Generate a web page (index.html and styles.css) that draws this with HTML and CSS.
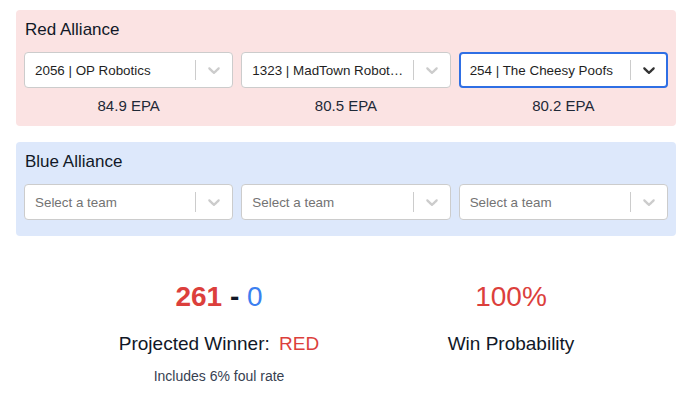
FILE: index.html
```html
<!DOCTYPE html>
<html>
<head>
<meta charset="utf-8">
<link rel="stylesheet" href="styles.css">
</head>
<body>
<div class="page">
  <section class="alliance red">
    <h2 class="alliance-title">Red Alliance</h2>
    <div class="slots">
      <div class="slot">
        <div class="select">
          <span class="value">2056 | OP Robotics</span>
          <span class="sep"></span>
          <span class="ind"><svg viewBox="0 0 20 20" width="20" height="20"><path d="M4.516 7.548c0.436-0.446 1.043-0.481 1.576 0l3.908 3.747 3.908-3.747c0.533-0.481 1.141-0.446 1.574 0 0.436 0.445 0.408 1.197 0 1.615-0.406 0.418-4.695 4.502-4.695 4.502-0.217 0.223-0.502 0.335-0.787 0.335s-0.57-0.112-0.789-0.335c0 0-4.287-4.084-4.695-4.502s-0.436-1.170 0-1.615z"/></svg></span>
        </div>
        <div class="epa">84.9 EPA</div>
      </div>
      <div class="slot">
        <div class="select">
          <span class="value">1323 | MadTown Robotics</span>
          <span class="sep"></span>
          <span class="ind"><svg viewBox="0 0 20 20" width="20" height="20"><path d="M4.516 7.548c0.436-0.446 1.043-0.481 1.576 0l3.908 3.747 3.908-3.747c0.533-0.481 1.141-0.446 1.574 0 0.436 0.445 0.408 1.197 0 1.615-0.406 0.418-4.695 4.502-4.695 4.502-0.217 0.223-0.502 0.335-0.787 0.335s-0.57-0.112-0.789-0.335c0 0-4.287-4.084-4.695-4.502s-0.436-1.170 0-1.615z"/></svg></span>
        </div>
        <div class="epa">80.5 EPA</div>
      </div>
      <div class="slot">
        <div class="select focused">
          <span class="value">254 | The Cheesy Poofs</span>
          <span class="sep"></span>
          <span class="ind"><svg viewBox="0 0 20 20" width="20" height="20"><path d="M4.516 7.548c0.436-0.446 1.043-0.481 1.576 0l3.908 3.747 3.908-3.747c0.533-0.481 1.141-0.446 1.574 0 0.436 0.445 0.408 1.197 0 1.615-0.406 0.418-4.695 4.502-4.695 4.502-0.217 0.223-0.502 0.335-0.787 0.335s-0.57-0.112-0.789-0.335c0 0-4.287-4.084-4.695-4.502s-0.436-1.170 0-1.615z"/></svg></span>
        </div>
        <div class="epa">80.2 EPA</div>
      </div>
    </div>
  </section>

  <section class="alliance blue">
    <h2 class="alliance-title">Blue Alliance</h2>
    <div class="slots">
      <div class="slot">
        <div class="select">
          <span class="value placeholder">Select a team</span>
          <span class="sep"></span>
          <span class="ind"><svg viewBox="0 0 20 20" width="20" height="20"><path d="M4.516 7.548c0.436-0.446 1.043-0.481 1.576 0l3.908 3.747 3.908-3.747c0.533-0.481 1.141-0.446 1.574 0 0.436 0.445 0.408 1.197 0 1.615-0.406 0.418-4.695 4.502-4.695 4.502-0.217 0.223-0.502 0.335-0.787 0.335s-0.57-0.112-0.789-0.335c0 0-4.287-4.084-4.695-4.502s-0.436-1.170 0-1.615z"/></svg></span>
        </div>
      </div>
      <div class="slot">
        <div class="select">
          <span class="value placeholder">Select a team</span>
          <span class="sep"></span>
          <span class="ind"><svg viewBox="0 0 20 20" width="20" height="20"><path d="M4.516 7.548c0.436-0.446 1.043-0.481 1.576 0l3.908 3.747 3.908-3.747c0.533-0.481 1.141-0.446 1.574 0 0.436 0.445 0.408 1.197 0 1.615-0.406 0.418-4.695 4.502-4.695 4.502-0.217 0.223-0.502 0.335-0.787 0.335s-0.57-0.112-0.789-0.335c0 0-4.287-4.084-4.695-4.502s-0.436-1.170 0-1.615z"/></svg></span>
        </div>
      </div>
      <div class="slot">
        <div class="select">
          <span class="value placeholder">Select a team</span>
          <span class="sep"></span>
          <span class="ind"><svg viewBox="0 0 20 20" width="20" height="20"><path d="M4.516 7.548c0.436-0.446 1.043-0.481 1.576 0l3.908 3.747 3.908-3.747c0.533-0.481 1.141-0.446 1.574 0 0.436 0.445 0.408 1.197 0 1.615-0.406 0.418-4.695 4.502-4.695 4.502-0.217 0.223-0.502 0.335-0.787 0.335s-0.57-0.112-0.789-0.335c0 0-4.287-4.084-4.695-4.502s-0.436-1.170 0-1.615z"/></svg></span>
        </div>
      </div>
    </div>
  </section>

  <section class="results">
    <div class="result">
      <div class="big"><span class="score-red">261</span> - <span class="score-blue">0</span></div>
      <div class="label">Projected Winner: <span class="winner">RED</span></div>
      <div class="note">Includes 6% foul rate</div>
    </div>
    <div class="result">
      <div class="big prob">100%</div>
      <div class="label">Win Probability</div>
    </div>
  </section>
</div>
</body>
</html>
```

FILE: styles.css
```css
* { box-sizing: border-box; }
body {
  margin: 0;
  font-family: "Liberation Sans", Arial, Helvetica, sans-serif;
  color: #111827;
  background: #ffffff;
}
.page {
  padding: 10px 14px 0 16px;
}
.alliance {
  border-radius: 4px;
  padding: 8px 8px 10px 8px;
}
.alliance.red { background: #fbe3e3; }
.alliance.blue {
  background: #dde8fb;
  margin-top: 16px;
  padding-bottom: 16px;
}
.alliance-title {
  margin: 0 0 10px 1px;
  font-size: 17px;
  font-weight: 400;
  line-height: 24px;
  color: #111827;
}
.slots {
  display: grid;
  grid-template-columns: repeat(3, 1fr);
  gap: 8px;
}
.slot { min-width: 0; }
.select {
  display: flex;
  align-items: center;
  height: 36px;
  background: #fff;
  border: 1px solid #cccccc;
  border-radius: 4px;
}
.select.focused {
  border: 2px solid #2f6fe4;
}
.value {
  flex: 1;
  min-width: 0;
  padding: 0 8px 0 10px;
  font-size: 13.4px;
  color: #1f1f1f;
  white-space: nowrap;
  overflow: hidden;
  text-overflow: ellipsis;
}
.focused .value { padding-left: 9px; }
.value.placeholder { color: #737373; }
.sep {
  width: 1px;
  height: 20px;
  background: #cccccc;
}
.ind {
  display: flex;
  padding: 0 8px;
}
.ind svg { fill: #cccccc; }
.focused .ind { padding-right: 7px; }
.focused .ind svg { fill: #333333; }
.epa {
  margin-top: 8px;
  text-align: center;
  font-size: 15px;
  line-height: 20px;
  color: #1f2937;
}
.results {
  display: grid;
  grid-template-columns: 292px 292px;
  padding-left: 57px;
  margin-top: 43px;
}
.result {
  display: flex;
  flex-direction: column;
  align-items: center;
}
.big {
  font-size: 28px;
  line-height: 36px;
  font-weight: 700;
  color: #111827;
}
.score-red { color: #dc3f3c; }
.score-blue { color: #3b7ff0; font-weight: 400; }
.big.prob {
  font-weight: 400;
  color: #dc3f3c;
}
.label {
  margin-top: 15px;
  font-size: 19px;
  line-height: 28px;
  color: #111827;
}
.winner {
  color: #dc3f3c;
  margin-left: 4px;
}
.note {
  margin-top: 9px;
  font-size: 14px;
  line-height: 18px;
  color: #374151;
}
```
